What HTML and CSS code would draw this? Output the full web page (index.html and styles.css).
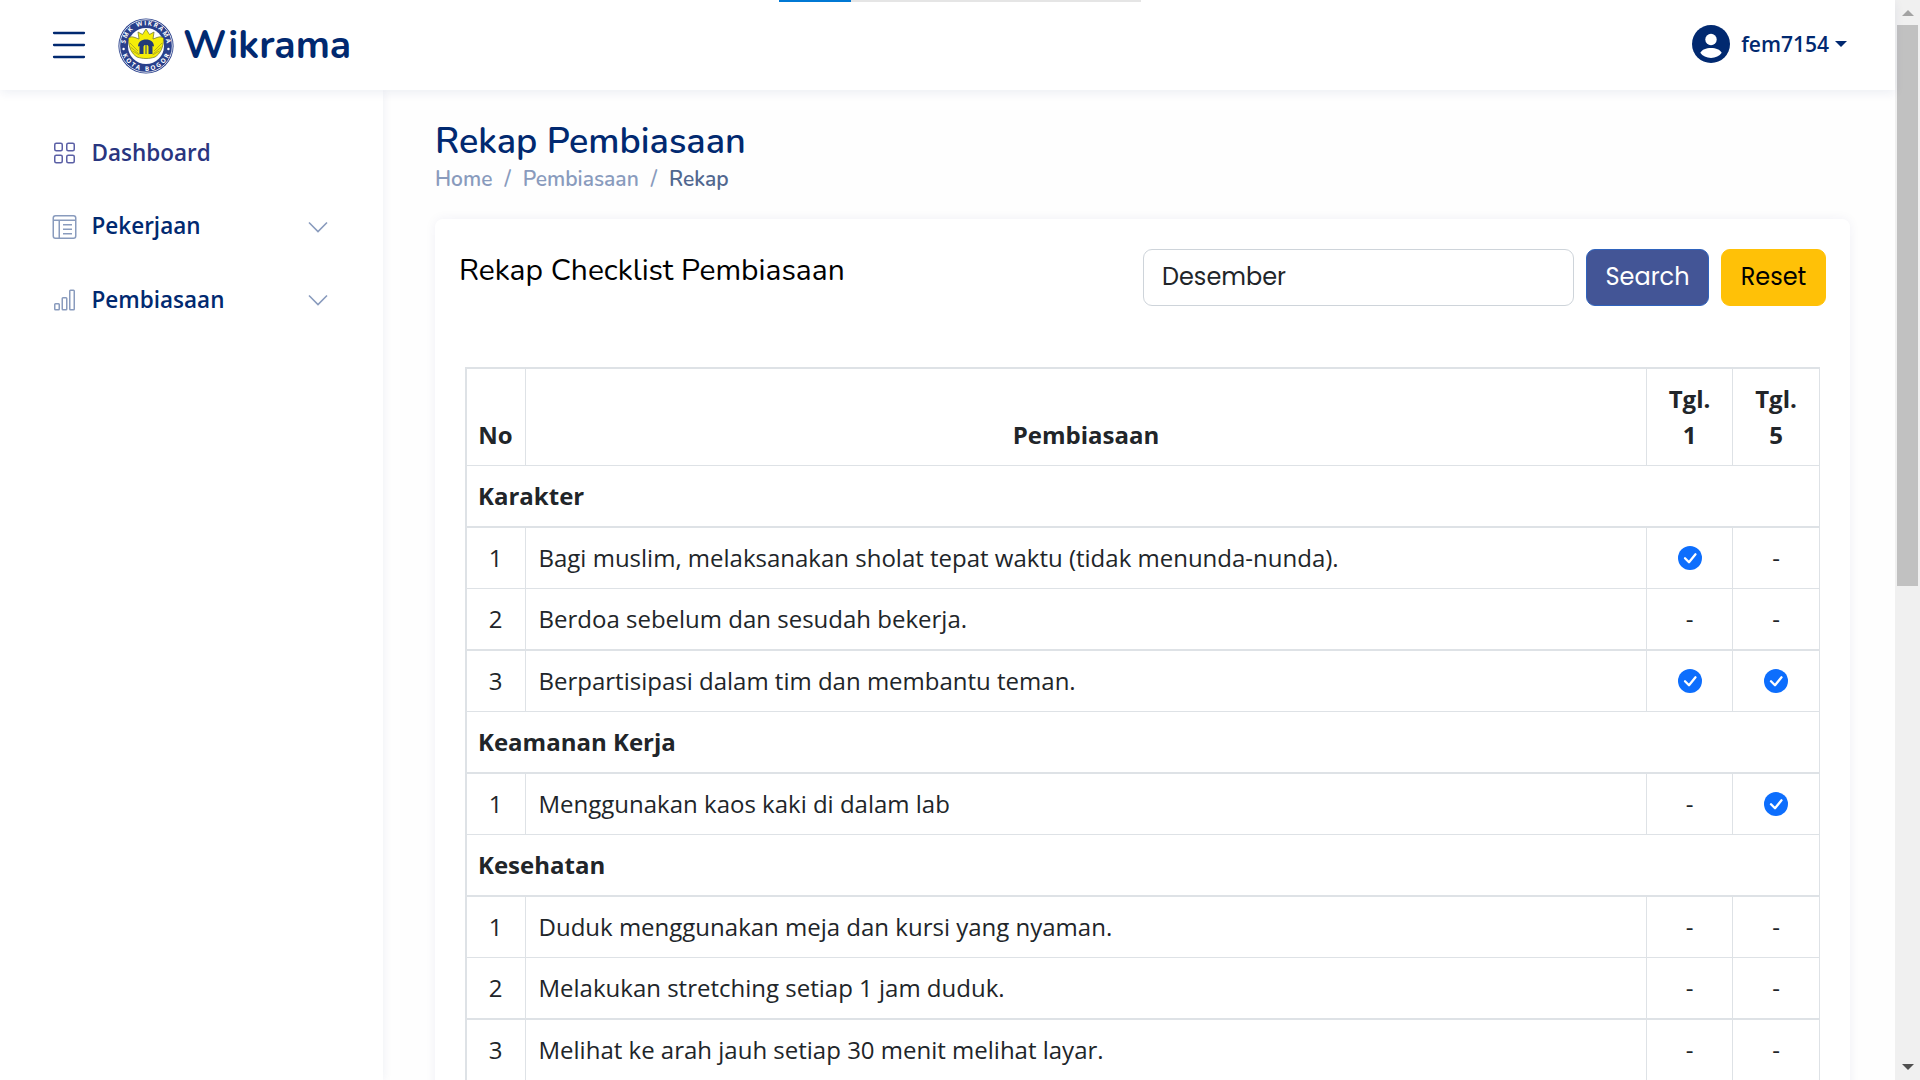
FILE: index.html
```html
<!DOCTYPE html>
<html lang="id">
<head>
<meta charset="utf-8">
<title>Wikrama</title>
<link rel="stylesheet" href="styles.css">
</head>
<body>
<div class="window">
  <div class="page">
    <header class="header">
      <svg class="menu-toggle" viewBox="0 0 34 28"><path d="M2 2h30M2 14h30M2 26h30"/></svg>
      <svg class="logo" viewBox="0 0 56 56">
        <defs>
          <path id="arc-top" d="M7.200 28a20.800 20.800 0 0 1 41.600 0"/>
          <path id="arc-bottom" d="M3.100 28a24.900 24.900 0 0 0 49.800 0"/>
        </defs>
        <circle cx="28" cy="28" r="27.600" fill="#29408c"/>
        <circle cx="28" cy="28" r="26.300" fill="none" stroke="#fff" stroke-width=".8"/>
        <circle cx="28" cy="28" r="18" fill="#fff"/>
        <path d="M20 14l4.500 2.500L28 11l3.500 5.500L36 14l-1 7 4-1.500c3-1 5-1 6.500 1 0 9-3 15-8.500 18.500-6 2-12 2-18 0C13.500 35.500 10.500 29.500 10.500 20.500c1.500-2 3.500-2 6.500-1l4 1.500z" fill="#f6ee08" stroke="#777f35" stroke-width=".8"/>
        <path d="M12 25l8 8M12.500 29l8 6.500M14.500 33l7 4M44 25l-8 8M43.500 29l-8 6.500M41.500 33l-7 4" stroke="#a49f25" stroke-width=".8"/>
        <path d="M20 28.500c0-4.500 3.500-7 8-7s8 2.500 8 7l-1.500-.5v8h-4v-7.500l-1-1.500h-3l-1 1.500V36h-4v-8z" fill="#233b78"/>
        <path d="M28 22v14" stroke="#233b78" stroke-width="1"/>
        <circle cx="5.600" cy="31" r="1.200" fill="#fff"/><circle cx="50.400" cy="31" r="1.200" fill="#fff"/>
        <text class="logo-text"><textPath href="#arc-top" startOffset="50%" textLength="60">SMK WIKRAMA</textPath></text>
        <text class="logo-text"><textPath href="#arc-bottom" startOffset="50%" textLength="60">KOTA BOGOR</textPath></text>
      </svg>
      <span class="brand">Wikrama</span>
      <div class="profile">
        <svg class="avatar" viewBox="0 0 38 38"><circle cx="19" cy="19" r="19"/><circle class="cut" cx="19" cy="14.500" r="5.700"/><path class="cut" d="M8.300 27.800C10 24.500 14 23 19 23s9 1.500 10.700 4.800C27.500 31 23.500 33 19 33s-8.500-2-10.700-5.200z"/></svg>
        <span class="user">fem7154</span>
        <span class="caret"></span>
      </div>
    </header>
    <div class="body">
      <nav class="sidebar">
        <a class="nav-item active">
          <svg class="icon" viewBox="0 0 16 16"><path d="M1 2.500A1.500 1.500 0 0 1 2.500 1h3A1.500 1.500 0 0 1 7 2.500v3A1.500 1.500 0 0 1 5.500 7h-3A1.500 1.500 0 0 1 1 5.500v-3zM2.500 2a.5.5 0 0 0-.5.5v3a.5.5 0 0 0 .5.5h3a.5.5 0 0 0 .5-.5v-3a.5.5 0 0 0-.5-.5h-3zm6.500.5A1.500 1.500 0 0 1 10.500 1h3A1.500 1.500 0 0 1 15 2.500v3A1.500 1.500 0 0 1 13.500 7h-3A1.500 1.500 0 0 1 9 5.500v-3zm1.500-.5a.5.5 0 0 0-.5.5v3a.5.5 0 0 0 .5.5h3a.5.5 0 0 0 .5-.5v-3a.5.5 0 0 0-.5-.5h-3zM1 10.500A1.500 1.500 0 0 1 2.500 9h3A1.500 1.500 0 0 1 7 10.500v3A1.500 1.500 0 0 1 5.500 15h-3A1.500 1.500 0 0 1 1 13.500v-3zm1.500-.5a.5.5 0 0 0-.5.5v3a.5.5 0 0 0 .5.5h3a.5.5 0 0 0 .5-.5v-3a.5.5 0 0 0-.5-.5h-3zm6.500.5A1.500 1.500 0 0 1 10.500 9h3a1.500 1.500 0 0 1 1.500 1.500v3a1.500 1.500 0 0 1-1.500 1.500h-3A1.500 1.500 0 0 1 9 13.500v-3zm1.500-.5a.5.5 0 0 0-.5.5v3a.5.5 0 0 0 .5.5h3a.5.5 0 0 0 .5-.5v-3a.5.5 0 0 0-.5-.5h-3z"/></svg>
          <span>Dashboard</span>
        </a>
        <a class="nav-item">
          <svg class="icon" viewBox="0 0 16 16"><path d="M2 0a2 2 0 0 0-2 2v12a2 2 0 0 0 2 2h12a2 2 0 0 0 2-2V2a2 2 0 0 0-2-2H2zm0 1h12a1 1 0 0 1 1 1v1H1V2a1 1 0 0 1 1-1zM1 4h3v11H2a1 1 0 0 1-1-1V4zm4 11V4h10v10a1 1 0 0 1-1 1H5z"/><path d="M7 6h6v1H7zM7 9h6v1H7zM7 12h6v1H7z"/></svg>
          <span>Pekerjaan</span>
          <svg class="chevron" viewBox="0 0 20 12"><path d="M1 1.500l9 9 9-9"/></svg>
        </a>
        <a class="nav-item">
          <svg class="icon" viewBox="0 0 16 16"><path d="M4 11H2v3h2v-3zm5-4H7v7h2V7zm5-5v12h-2V2h2zm-2-1a1 1 0 0 0-1 1v12a1 1 0 0 0 1 1h2a1 1 0 0 0 1-1V2a1 1 0 0 0-1-1h-2zM6 7a1 1 0 0 1 1-1h2a1 1 0 0 1 1 1v7a1 1 0 0 1-1 1H7a1 1 0 0 1-1-1V7zm-5 4a1 1 0 0 1 1-1h2a1 1 0 0 1 1 1v3a1 1 0 0 1-1 1H2a1 1 0 0 1-1-1v-3z"/></svg>
          <span>Pembiasaan</span>
          <svg class="chevron" viewBox="0 0 20 12"><path d="M1 1.500l9 9 9-9"/></svg>
        </a>
      </nav>
      <main class="main">
        <h1 class="title">Rekap Pembiasaan</h1>
        <div class="breadcrumb"><span>Home</span><span class="sep">/</span><span>Pembiasaan</span><span class="sep">/</span><span class="current">Rekap</span></div>
        <section class="card">
          <div class="toolbar">
            <h2 class="card-title">Rekap Checklist Pembiasaan</h2>
            <div class="select">Desember</div>
            <div class="btn search">Search</div>
            <div class="btn reset">Reset</div>
          </div>
          <table class="recap">
            <colgroup><col class="c-no"><col class="c-name"><col class="c-day"><col class="c-last"></colgroup>
            <tbody>
            <tr class="head"><th>No</th><th>Pembiasaan</th><th>Tgl.<br>1</th><th>Tgl.<br>5</th></tr>
            <tr><th class="group" colspan="4">Karakter</th></tr>
            <tr><td>1</td><td>Bagi muslim, melaksanakan sholat tepat waktu (tidak menunda-nunda).</td><td><svg class="check" viewBox="0 0 24 24"><circle cx="12" cy="12" r="12"/><path d="M7 12.300l4 4 6.500-8"/></svg></td><td>-</td></tr>
            <tr><td>2</td><td>Berdoa sebelum dan sesudah bekerja.</td><td>-</td><td>-</td></tr>
            <tr><td>3</td><td>Berpartisipasi dalam tim dan membantu teman.</td><td><svg class="check" viewBox="0 0 24 24"><circle cx="12" cy="12" r="12"/><path d="M7 12.300l4 4 6.500-8"/></svg></td><td><svg class="check" viewBox="0 0 24 24"><circle cx="12" cy="12" r="12"/><path d="M7 12.300l4 4 6.500-8"/></svg></td></tr>
            <tr><th class="group" colspan="4">Keamanan Kerja</th></tr>
            <tr><td>1</td><td>Menggunakan kaos kaki di dalam lab</td><td>-</td><td><svg class="check" viewBox="0 0 24 24"><circle cx="12" cy="12" r="12"/><path d="M7 12.300l4 4 6.500-8"/></svg></td></tr>
            <tr><th class="group" colspan="4">Kesehatan</th></tr>
            <tr><td>1</td><td>Duduk menggunakan meja dan kursi yang nyaman.</td><td>-</td><td>-</td></tr>
            <tr><td>2</td><td>Melakukan stretching setiap 1 jam duduk.</td><td>-</td><td>-</td></tr>
            <tr><td>3</td><td>Melihat ke arah jauh setiap 30 menit melihat layar.</td><td>-</td><td>-</td></tr>
            </tbody>
          </table>
        </section>
      </main>
    </div>
    <div class="progress"><div class="progress-value"></div></div>
  </div>
  <div class="scrollbar">
    <svg class="arrow" viewBox="0 0 12 6"><path d="M0 6l6-6 6 6z" fill="#a3a3a3"/></svg>
    <div class="thumb"></div>
    <svg class="arrow down" viewBox="0 0 12 6"><path d="M0 0h12l-6 6z" fill="#505050"/></svg>
  </div>
</div>
</body>
</html>
```
FILE: styles.css
```css
* { box-sizing: border-box; }
body { margin: 0; overflow: hidden; background: #fefefe; color: #212529; font-family: "Open Sans", sans-serif; font-size: 24px; line-height: 36px; }
h1, h2 { margin: 0; }
.window { display: flex; width: 1920px; height: 1080px; overflow: hidden; }
.page { position: relative; width: 1895px; display: flex; flex-direction: column; }
.header { position: relative; z-index: 2; flex: none; height: 90px; display: flex; align-items: center; padding: 0 48px 0 52px; background: #fff; box-shadow: 0 3px 10px rgba(1, 41, 112, .07); }
.menu-toggle { width: 34px; height: 28px; fill: none; stroke: #012970; stroke-width: 2.3; stroke-linecap: round; }
.logo { width: 56px; height: 56px; margin: 1px 0 0 32px; }
.logo-text { font: 700 6.3px "Open Sans", sans-serif; fill: #fff; text-anchor: middle; }
.brand { margin: 2px 0 0 9px; font: 700 39px/48px Nunito, Lato, sans-serif; color: #012970; }
.profile { margin: -2px 0 0 auto; display: flex; align-items: center; color: #012970; }
.avatar { width: 38px; height: 38px; fill: #012970; }
.avatar .cut { fill: #fff; }
.user { margin-left: 11px; font-size: 21px; font-weight: 600; }
.caret { margin-left: 6px; border: 6px solid transparent; border-top-color: #012970; border-bottom: 0; }
.body { flex: 1; display: flex; min-height: 0; }
.sidebar { width: 383px; flex: none; padding: 33px 55px 0 52px; background: #fff; box-shadow: 0 0 10px rgba(1, 41, 112, .07); display: flex; flex-direction: column; gap: 13.500px; }
.nav-item { display: flex; align-items: center; height: 60px; font-size: 22.500px; font-weight: 600; color: #012970; }
.nav-item span { margin-top: -.4px; }
.icon { width: 25px; height: 24px; margin-right: 14.500px; fill: #899bbd; }
.active { color: #29357f; }
.active .icon { fill: #5a5fa5; }
.chevron { width: 20px; height: 12px; margin-left: auto; fill: none; stroke: #899bbd; stroke-width: 1.600; }
.main { flex: 1; padding: 30px 45px 0 52px; }
.title { font: 600 36px/43px Nunito, Lato, sans-serif; color: #012970; }
.breadcrumb { display: flex; margin-top: 1px; gap: 12px; font: 600 21px/31px Nunito, Lato, sans-serif; color: #899bbd; }
.current { color: #51678f; }
.card { height: 1000px; margin-top: 24px; padding: 30px 24px 0; background: #fff; border-radius: 8px; box-shadow: 0 0 12px rgba(1, 41, 112, .06); }
.toolbar { display: flex; align-items: flex-start; height: 118px; }
.card-title { flex: 1; padding-top: 2px; font: 400 30px/40px Nunito, Lato, sans-serif; color: #000; }
.select, .btn { height: 57px; border-radius: 9px; font: 400 24px/54px Poppins, Inter, sans-serif; border: 1px solid; }
.select { width: 431px; padding-left: 18px; border-color: #ced4da; background: #fff; }
.btn { margin-left: 12px; text-align: center; }
.search { width: 123px; background: #435596; border-color: #2f63bd; color: #fff; }
.reset { width: 105px; background: #ffc107; border-color: #ffc107; color: #000; }
.recap { width: 1355px; margin-left: 6px; table-layout: fixed; border-collapse: separate; border-spacing: 0; border-top: 2px solid #dee2e6; border-left: 2px solid #dee2e6; }
.c-no { width: 59px; }
.c-name { width: 1121px; }
.c-day { width: 86px; }
.c-last { width: 87px; }
.recap th, .recap td { height: 61px; padding: 0 12px; text-align: center; border-right: 1px solid #dee2e6; border-bottom: 1px solid #dee2e6; }
.recap tr:nth-child(even) > * { height: 62px; border-bottom-width: 2px; }
.recap .head th { height: 97px; padding-bottom: 12px; vertical-align: bottom; }
.recap .group, .recap td:nth-child(2) { text-align: left; }
.recap td:nth-child(2) { padding-left: 12.500px; }
.recap tr > :first-child { padding-left: 11px; }
.check { display: block; width: 24px; height: 24px; margin: 0 auto; fill: #0d6efd; }
.check path { fill: none; stroke: #fff; stroke-width: 2.300; stroke-linecap: round; stroke-linejoin: round; }
.progress { position: absolute; z-index: 3; top: 0; left: 779px; width: 362px; height: 2px; background: #e5e5e5; }
.progress-value { width: 72px; height: 2px; background: #0078d4; }
.scrollbar { width: 25px; display: flex; flex-direction: column; align-items: center; padding: 10px 0; background: #f0f0f0; }
.arrow { width: 12px; height: 6px; }
.thumb { width: 21px; height: 561px; margin-top: 9px; background: #c1c1c1; }
.down { margin-top: auto; }
```
